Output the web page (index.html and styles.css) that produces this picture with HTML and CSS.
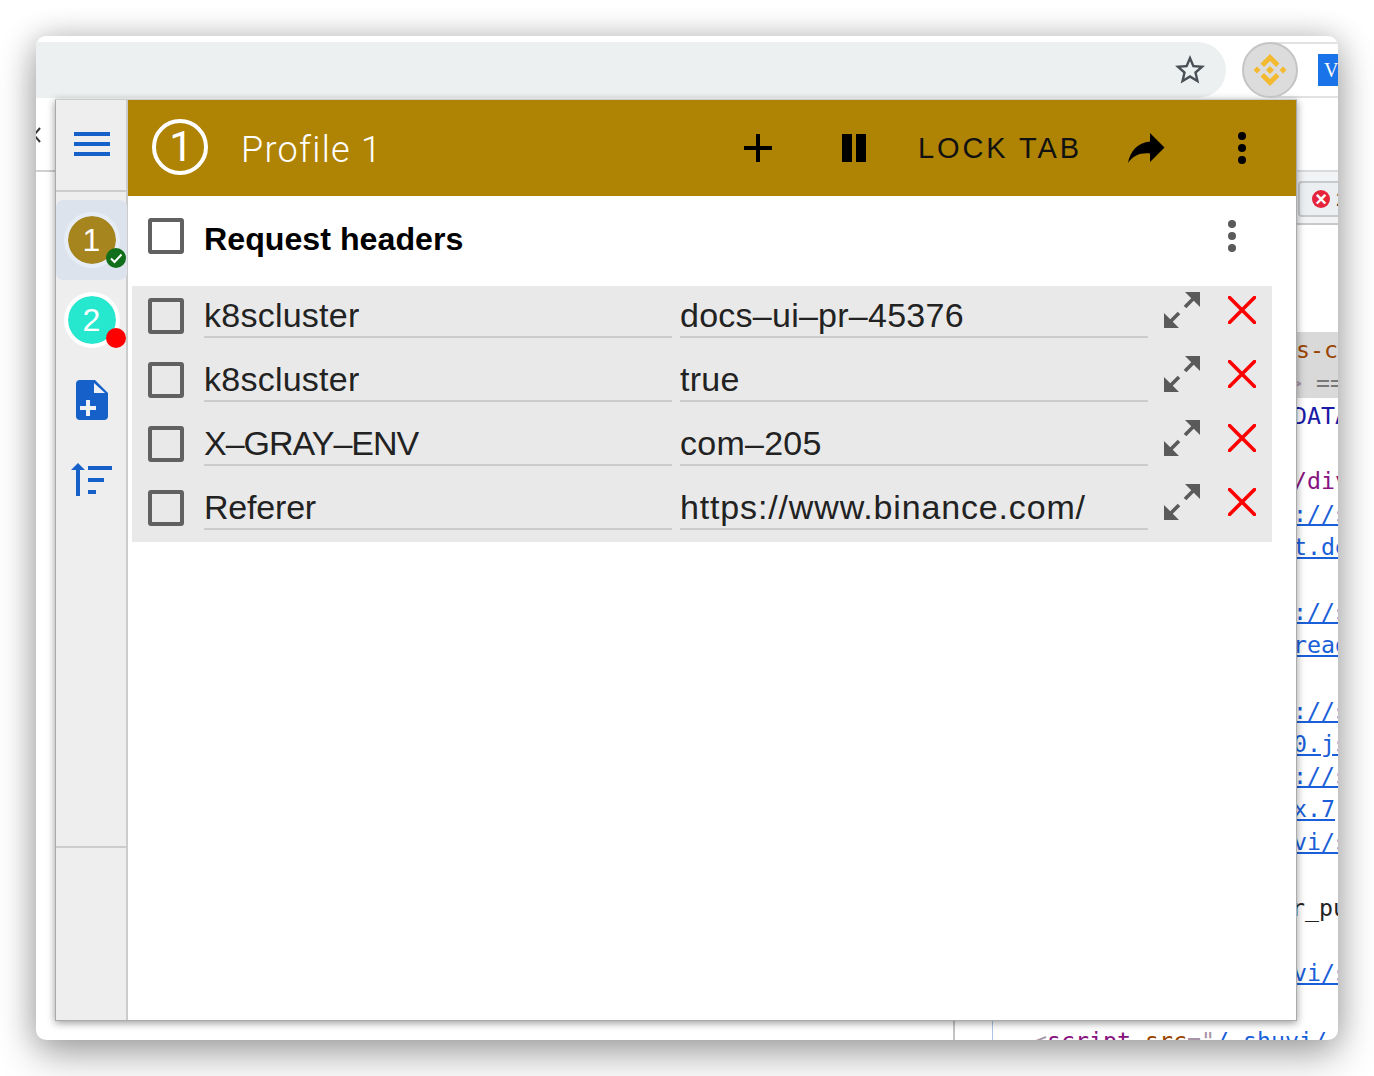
FILE: index.html
```html
<!DOCTYPE html>
<html lang="en">
<head>
    <meta charset="UTF-8">
    <title>Profile 1</title>
    <link rel="stylesheet" href="styles.css">
</head>
<body>
    <div class="window">
        <div class="toolbar">
            <div class="address-bar">
                <svg class="star" viewBox="0 0 24 24"><path d="M22 9.24l-7.19-.62L12 2 9.19 8.63 2 9.24l5.46 4.73L5.82 21 12 17.27 18.18 21l-1.63-7.03L22 9.24zM12 15.4l-3.76 2.27 1-4.28-3.32-2.88 4.38-.38L12 6.1l1.71 4.04 4.38.38-3.32 2.88 1 4.28L12 15.4z"/></svg>
            </div>
            <div class="ext-strip">
                <div class="ext-button">
                    <svg class="binance" viewBox="-17 -17 34 34">
                        <polygon points="0,-16 9.5,-6.5 6,-3 0,-9 -6,-3 -9.5,-6.5"/>
                        <polygon points="0,16 9.5,6.500 6,3 0,9 -6,3 -9.5,6.500"/>
                        <polygon points="0,-4 4,0 0,4 -4,0"/>
                        <polygon points="-13,-3.5 -9.5,0 -13,3.5 -16.5,0"/>
                        <polygon points="13,-3.5 16.5,0 13,3.5 9.5,0"/>
                    </svg>
                </div>
                <div class="ext-rest">
                    <div class="ext-blue">V</div>
                </div>
            </div>
        </div>

        <div class="page">
            <div class="page-left">
                <div class="page-nav">
                    <svg class="back" viewBox="0 0 8 16"><path d="M6 1 L0 8 L6 15"/></svg>
                </div>
            </div>
            <div class="page-gutter"></div>
            <div class="devtools">
                <div class="devtools-tabs">
                    <div class="error-pill"><span class="error-dot">×</span><span class="error-count">2</span></div>
                </div>
                <div class="code">
                    <div class="code-line selected attr-line"><span class="c-attr">s-c</span></div>
                    <div class="code-line selected marker-line"><span class="c-tag">&gt;</span> <span class="c-eq">==</span></div>
                    <div class="code-line"><span class="c-data">DATA</span></div>
                    <div class="code-line"></div>
                    <div class="code-line"><span class="c-elem">/div</span></div>
                    <div class="code-line"><span class="c-link">://s</span></div>
                    <div class="code-line"><span class="c-link">t.de</span></div>
                    <div class="code-line"></div>
                    <div class="code-line"><span class="c-link">://s</span></div>
                    <div class="code-line"><span class="c-link">read</span></div>
                    <div class="code-line"></div>
                    <div class="code-line"><span class="c-link">://s</span></div>
                    <div class="code-line"><span class="c-link">0.js</span></div>
                    <div class="code-line"><span class="c-link">://s</span></div>
                    <div class="code-line"><span class="c-link">x.7</span></div>
                    <div class="code-line"><span class="c-link">vi/s</span></div>
                    <div class="code-line"></div>
                    <div class="code-line text-line"><span class="c-text">r_pu</span></div>
                    <div class="code-line"></div>
                    <div class="code-line"><span class="c-link">vi/s</span></div>
                    <div class="code-line"></div>
                    <div class="code-line script-line"><span class="c-tag">&lt;</span><span class="c-elem">script</span> <span class="c-attr">src</span><span class="c-tag">="</span><span class="c-link">/_shuvi/</span></div>
                </div>
            </div>
        </div>

        <div class="popup">
            <div class="sidebar">
                <div class="side-top">
                    <div class="hamburger"><span></span><span></span><span></span></div>
                </div>
                <div class="side-nav">
                    <div class="profile-item active">
                        <div class="avatar gold">1</div>
                        <span class="badge badge-ok">
                            <svg viewBox="0 0 20 20"><path d="M5 10.5 L8.5 14 L15.5 6.5"/></svg>
                        </span>
                    </div>
                    <div class="profile-item">
                        <div class="avatar teal">2</div>
                        <span class="badge badge-off"></span>
                    </div>
                    <div class="side-icon file-icon">
                        <svg width="32" height="40" viewBox="0 0 32 40">
                            <path class="blue" d="M4 0H19L32 13V36a4 4 0 0 1-4 4H4a4 4 0 0 1-4-4V4a4 4 0 0 1 4-4Z"/>
                            <path class="pale" d="M18 3L29 13H18Z"/>
                            <path class="pale" d="M10 20h4v6h6v4h-6v6h-4v-6H4v-4h6Z"/>
                        </svg>
                    </div>
                    <div class="side-icon sort-icon">
                        <svg width="42" height="34" viewBox="0 0 42 34">
                            <path class="blue" d="M7 0L14 7H9V33H5V7H0Z"/>
                            <rect class="blue" x="17" y="3" width="24" height="4"/>
                            <rect class="blue" x="17" y="15" width="16" height="4"/>
                            <rect class="blue" x="17" y="27" width="8" height="4"/>
                        </svg>
                    </div>
                </div>
                <div class="side-bottom"></div>
            </div>

            <div class="main">
                <div class="header">
                    <div class="profile-ring">1</div>
                    <div class="profile-name">Profile 1</div>
                    <svg class="head-plus" viewBox="0 0 28 28"><path d="M12 0h4v12h12v4H16v12h-4V16H0v-4h12Z"/></svg>
                    <div class="head-pause"><span></span><span></span></div>
                    <div class="lock-tab">LOCK TAB</div>
                    <svg class="head-share" viewBox="0 0 37 30"><path d="M22 0L36.5 14.5L22 29V20.500C12.500 19.500 5 22.500 0 30C2 18.500 9.500 9.500 22 8.500Z"/></svg>
                    <div class="kebab dark"><span></span><span></span><span></span></div>
                </div>

                <div class="title-row">
                    <div class="checkbox"></div>
                    <div class="title">Request headers</div>
                    <div class="kebab grey"><span></span><span></span><span></span></div>
                </div>

                <div class="rows">
                    <div class="row">
                        <div class="checkbox"></div>
                        <div class="field">k8scluster</div>
                        <div class="field">docs–ui–pr–45376</div>
                        <svg class="expand" viewBox="0 0 36 36"><use href="#expand-shape"/></svg>
                        <svg class="remove" viewBox="0 0 28 28"><path d="M1.500 1.500L26.500 26.500M26.500 1.500L1.500 26.500"/></svg>
                    </div>
                    <div class="row">
                        <div class="checkbox"></div>
                        <div class="field">k8scluster</div>
                        <div class="field">true</div>
                        <svg class="expand" viewBox="0 0 36 36"><use href="#expand-shape"/></svg>
                        <svg class="remove" viewBox="0 0 28 28"><path d="M1.500 1.500L26.500 26.500M26.500 1.500L1.500 26.500"/></svg>
                    </div>
                    <div class="row">
                        <div class="checkbox"></div>
                        <div class="field field-caps">X–GRAY–ENV</div>
                        <div class="field">com–205</div>
                        <svg class="expand" viewBox="0 0 36 36"><use href="#expand-shape"/></svg>
                        <svg class="remove" viewBox="0 0 28 28"><path d="M1.500 1.500L26.500 26.500M26.500 1.500L1.500 26.500"/></svg>
                    </div>
                    <div class="row">
                        <div class="checkbox"></div>
                        <div class="field field-short">Referer</div>
                        <div class="field field-url">https://www.binance.com/</div>
                        <svg class="expand" viewBox="0 0 36 36"><use href="#expand-shape"/></svg>
                        <svg class="remove" viewBox="0 0 28 28"><path d="M1.500 1.500L26.500 26.500M26.500 1.500L1.500 26.500"/></svg>
                    </div>
                </div>
            </div>
        </div>
    </div>

    <svg class="defs" width="0" height="0">
        <defs>
            <g id="expand-shape">
                <polygon points="21,0 36,0 36,15"/>
                <polygon points="0,21 0,36 15,36"/>
                <path d="M29 7L21 15M7 29L15 21" stroke="#5a5a5a" stroke-width="3.6" fill="none"/>
            </g>
        </defs>
    </svg>
</body>
</html>
```

FILE: styles.css
```css
html, body {
    margin: 0;
    padding: 0;
    height: 1076px;
    overflow: hidden;
    background-color: #fff;
}
body {
    font-family: "Liberation Sans", Arial, sans-serif;
    padding: 36px 36px 0;
    box-sizing: border-box;
}
.defs {
    display: block;
}

/* browser window */
.window {
    position: relative;
    width: 1302px;
    height: 1004px;
    background-color: #fff;
    border-radius: 10px;
    box-shadow: 0 16px 40px rgba(0,0,0,0.3), 0 0 30px rgba(0,0,0,0.2);
}
.toolbar {
    display: flex;
    height: 63px;
    padding-top: 6px;
    box-sizing: border-box;
    border-radius: 10px 10px 0 0;
    overflow: hidden;
}
.address-bar {
    width: 1190px;
    height: 56px;
    background-color: #ecf0f1;
    border-radius: 0 28px 28px 0;
    display: flex;
    align-items: center;
    justify-content: flex-end;
    padding-right: 18px;
    box-sizing: border-box;
}
.star {
    width: 36px;
    height: 36px;
    fill: #4a5055;
}
.ext-strip {
    flex: 1;
    display: flex;
    height: 56px;
    margin-left: 16px;
}
.ext-button {
    position: relative;
    z-index: 1;
    width: 56px;
    height: 56px;
    flex-shrink: 0;
    box-sizing: border-box;
    background-color: #dcdcdc;
    border: 2px solid #c4c4c4;
    border-radius: 50%;
    display: flex;
    align-items: center;
    justify-content: center;
}
.binance {
    width: 34px;
    height: 34px;
    fill: #f3ba2f;
}
.ext-rest {
    flex: 1;
    display: flex;
    align-items: center;
    margin-left: -28px;
    padding-left: 48px;
    border-top: 2px solid #e0e2e4;
    border-bottom: 2px solid #e0e2e4;
}
.ext-blue {
    width: 20px;
    height: 32px;
    background-color: #1a73e8;
    color: #fff;
    font-family: "Liberation Serif", serif;
    font-size: 20px;
    line-height: 32px;
    text-indent: 6px;
    overflow: hidden;
}

/* page behind the popup */
.page {
    display: flex;
    height: 941px;
    overflow: hidden;
    border-radius: 0 0 10px 10px;
}
.page-left {
    width: 917px;
    border-right: 2px solid #c4c4c4;
}
.page-nav {
    height: 73px;
    border-bottom: 2px solid #d0d0d0;
    box-sizing: border-box;
    padding-top: 28px;
}
.back {
    display: block;
    width: 8px;
    height: 16px;
    margin-left: -2px;
    fill: none;
    stroke: #333;
    stroke-width: 2;
}
.page-gutter {
    width: 37px;
    border-right: 1px solid #a9c5ea;
}
.devtools {
    flex: 1;
    min-width: 0;
}
.devtools-tabs {
    height: 55px;
    margin-top: 71px;
    background-color: #f1f3f4;
    border-top: 2px solid #d8dadd;
    border-bottom: 2px solid #c6cacd;
    box-sizing: border-box;
    padding: 9px 0 0 305px;
    overflow: hidden;
}
.error-pill {
    width: 60px;
    height: 36px;
    background-color: #ebeff1;
    border: 2px solid #c6cacd;
    border-radius: 4px;
    box-sizing: border-box;
    display: flex;
    align-items: center;
    padding-left: 12px;
    gap: 6px;
}
.error-dot {
    width: 18px;
    height: 18px;
    border-radius: 50%;
    background-color: #e5243b;
    color: #fff;
    font-size: 20px;
    font-weight: bold;
    line-height: 18px;
    text-align: center;
}
.error-count {
    font-size: 20px;
    color: #333;
}
.code {
    margin-top: 107px;
    font-family: "DejaVu Sans Mono", monospace;
    font-size: 23.25px;
    line-height: 36.8px;
}
.code-line {
    height: 32.8px;
    padding-left: 300px;
    white-space: pre;
}
.code-line.selected {
    background-color: #d9d9d9;
}
.attr-line {
    padding-left: 303px;
}
.marker-line {
    padding-left: 295px;
}
.text-line {
    padding-left: 298px;
}
.script-line {
    margin-top: 2px;
    padding-left: 40px;
}
.c-attr { color: #994500; }
.c-tag { color: #a894a6; }
.c-eq { color: #777; }
.c-data { color: #1a1aa6; }
.c-elem { color: #881280; }
.c-text { color: #222; }
.c-link {
    color: #1a5fd9;
    text-decoration: underline;
}

/* extension popup */
.popup {
    position: absolute;
    left: 19px;
    top: 63px;
    width: 1242px;
    height: 922px;
    display: flex;
    box-sizing: border-box;
    background-color: #fff;
    border-top: 1px solid #ccc;
    border-right: 1px solid #aaa;
    border-bottom: 1px solid #aaa;
    box-shadow: 0 2px 8px rgba(0,0,0,0.4);
}
.sidebar {
    width: 73px;
    flex-shrink: 0;
    display: flex;
    flex-direction: column;
    background-color: #eee;
    border-left: 1px solid #aaa;
    border-right: 2px solid #ccc;
    box-sizing: border-box;
}
.side-top {
    height: 92px;
    border-bottom: 2px solid #ccc;
    box-sizing: border-box;
    padding: 32px 0 0 18px;
}
.hamburger span {
    display: block;
    width: 36px;
    height: 4px;
    margin-bottom: 6px;
    background-color: #1560c9;
}
.side-nav {
    flex: 1;
    padding-top: 8px;
}
.side-bottom {
    height: 172px;
    border-top: 2px solid #ccc;
}
.profile-item {
    position: relative;
    height: 80px;
    display: flex;
    align-items: center;
    justify-content: center;
    margin-right: -1px;
}
.profile-item.active {
    background-color: #dde3ed;
    border-radius: 7px;
}
.avatar {
    width: 56px;
    height: 56px;
    box-sizing: border-box;
    border: 4px solid #fff;
    border-radius: 50%;
    color: #fff;
    font-family: "Liberation Sans", sans-serif;
    font-size: 32px;
    line-height: 48px;
    text-align: center;
}
.avatar.gold {
    background-color: #a6841e;
    border-color: #e6edf7;
    background-clip: padding-box;
}
.avatar.teal {
    background-color: #26e8cf;
    background-clip: padding-box;
}
.badge {
    position: absolute;
    left: 50px;
    top: 48px;
    width: 20px;
    height: 20px;
    border-radius: 50%;
}
.badge svg {
    display: block;
    fill: none;
    stroke: #fff;
    stroke-width: 2;
}
.badge-ok {
    background-color: #116e1a;
}
.badge-off {
    background-color: #f00;
}
.side-icon {
    display: flex;
    justify-content: flex-start;
}
.side-icon svg {
    display: block;
}
.file-icon {
    padding: 20px 0 0 20px;
}
.sort-icon {
    padding: 43px 0 0 15px;
}
.blue {
    fill: #1560c9;
}
.pale {
    fill: #eef1f5;
}

.main {
    flex: 1;
    min-width: 0;
}
.header {
    height: 96px;
    background-color: #af8405;
    display: flex;
    align-items: center;
    padding-left: 24px;
    box-sizing: border-box;
}
.profile-ring {
    width: 56px;
    height: 56px;
    margin-top: -2px;
    padding-left: 2px;
    box-sizing: border-box;
    border: 4px solid #fff;
    border-radius: 50%;
    color: #fff;
    font-family: Roboto, sans-serif;
    font-size: 42px;
    line-height: 48px;
    text-align: center;
    flex-shrink: 0;
}
.profile-name {
    width: 503px;
    margin: 3px 0 0 33px;
    color: #fff;
    font-family: Roboto, sans-serif;
    font-weight: 300;
    font-size: 36px;
    letter-spacing: 1.3px;
    flex-shrink: 0;
}
.head-plus {
    width: 28px;
    height: 28px;
    flex-shrink: 0;
}
.head-pause {
    display: flex;
    gap: 4px;
    margin-left: 70px;
}
.head-pause span {
    width: 10px;
    height: 28px;
    background-color: #000;
}
.lock-tab {
    width: 210px;
    margin-left: 52px;
    font-size: 29px;
    letter-spacing: 2.9px;
    color: #111;
    white-space: nowrap;
    flex-shrink: 0;
}
.head-share {
    width: 37px;
    height: 30px;
    flex-shrink: 0;
}
.kebab {
    display: flex;
    flex-direction: column;
    gap: 4px;
}
.kebab span {
    width: 8px;
    height: 8px;
    border-radius: 50%;
}
.kebab.dark {
    margin-left: 73px;
}
.kebab.dark span {
    background-color: #000;
}
.kebab.grey {
    margin-top: 2px;
}
.kebab.grey span {
    background-color: #5a5a5a;
}

.title-row {
    height: 90px;
    display: flex;
    align-items: flex-start;
    padding: 22px 0 0 20px;
    box-sizing: border-box;
}
.checkbox {
    width: 36px;
    height: 36px;
    box-sizing: border-box;
    border: 4px solid #616161;
    border-radius: 3px;
    flex-shrink: 0;
}
.title {
    width: 1024px;
    margin: 3px 0 0 20px;
    color: #000;
    font-size: 32.2px;
    font-weight: bold;
    line-height: 36px;
    flex-shrink: 0;
}
.rows {
    width: 1140px;
    margin-left: 4px;
    background-color: #e9e9e9;
}
.row {
    height: 64px;
    display: flex;
    align-items: flex-start;
    padding-left: 16px;
    box-sizing: border-box;
}
.row .checkbox {
    margin-top: 12px;
    margin-right: 20px;
}
.field {
    width: 468px;
    height: 40px;
    margin-top: 12px;
    margin-right: 8px;
    border-bottom: 2px solid #ccc;
    box-sizing: border-box;
    color: #222;
    font-size: 34px;
    line-height: 35px;
    letter-spacing: 0.25px;
    white-space: nowrap;
    flex-shrink: 0;
}
.field-caps {
    letter-spacing: -1px;
}
.field-short {
    letter-spacing: -0.2px;
}
.field-url {
    letter-spacing: 0.85px;
}
.expand {
    width: 36px;
    height: 36px;
    margin-top: 6px;
    margin-left: 8px;
    fill: #5a5a5a;
    flex-shrink: 0;
}
.remove {
    width: 28px;
    height: 28px;
    margin-top: 10px;
    margin-left: 28px;
    fill: none;
    stroke: #f00;
    stroke-width: 3.6;
    stroke-linecap: round;
    flex-shrink: 0;
}
```
